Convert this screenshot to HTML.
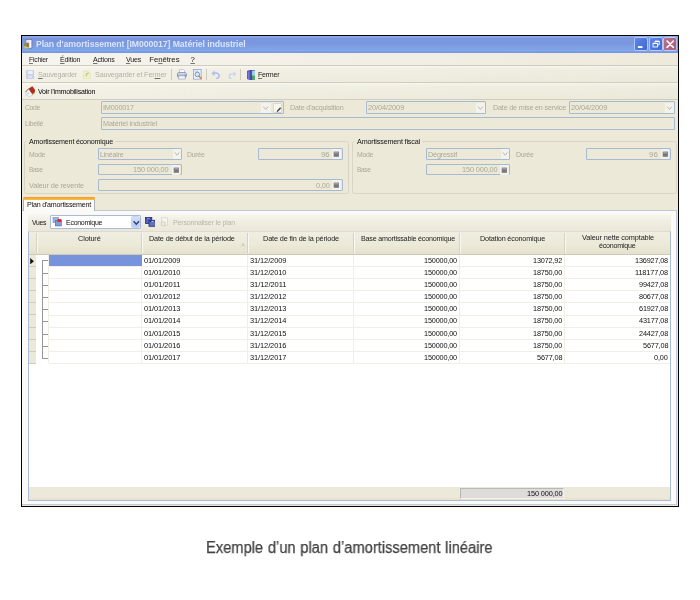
<!DOCTYPE html>
<html lang="fr"><head><meta charset="utf-8"><title>Plan d'amortissement</title>
<style>
html,body{margin:0;padding:0;background:#fff;}
body{width:700px;height:600px;position:relative;overflow:hidden;font-family:'Liberation Sans',sans-serif;}
#r{position:absolute;left:0;top:0;width:700px;height:600px;will-change:transform;opacity:.999;filter:blur(.35px);}
#r>div{position:absolute;box-sizing:border-box;}
#r svg{display:block;position:absolute;left:0;top:0;}
.t{position:absolute;white-space:pre;font-family:'Liberation Sans',sans-serif;}
u{text-decoration:underline;text-decoration-thickness:.6px;text-underline-offset:.6px;text-decoration-color:rgba(30,30,30,.6);}
</style></head>
<body><div id="r">
<div style="left:21px;top:35px;width:658px;height:472px;background:#000;"></div>
<div style="left:22px;top:36px;width:656px;height:470px;background:#ece9d8;"></div>
<div style="left:22px;top:36px;width:656px;height:16.6px;background:linear-gradient(#8eabea 0%,#89a6e6 7%,#7a96de 15%,#7a97df 45%,#7ea1e4 70%,#81a8e9 87%,#7795e0 94%,#7a98e2 100%);"></div>
<span class="t" style="left:35.70px;top:38.25px;font-size:9px;line-height:13px;color:#dae4f9;letter-spacing:-0.093px;font-weight:bold;transform:scaleX(0.9679);transform-origin:0 50%;">Plan d'amortissement [IM000017] Matériel industriel</span>
<div style="left:23.2px;top:38.8px;width:9.6px;height:10.2px;"><svg width="9.6" height="10.2" viewBox="0 0 9.6 10.2"><rect x="3" y=".6" width="5.9" height="8.6" fill="#f3f6fc" stroke="#6a7086" stroke-width=".7"/><rect x="3.6" y="1.2" width="3" height="7.4" fill="#dfe6f4"/><rect x=".3" y="3.4" width="5.8" height="6.2" rx=".8" fill="#b9a574"/><rect x="1" y="3.8" width="2.2" height="3.4" fill="#6f9a58"/><rect x="3.6" y="4.2" width="2" height="3.6" fill="#8b6a40"/><rect x="1.2" y="7.4" width="1.8" height="1.8" fill="#d8c060"/><rect x="3.4" y="8" width="1.8" height="1.4" fill="#c8c8c0"/></svg></div>
<div style="left:635px;top:38px;width:12.2px;height:12.2px;background:linear-gradient(135deg,#5f86e6,#3f66d6);border-radius:1.5px;box-shadow:0 0 0 .7px rgba(230,238,255,.75);"><svg width="12.2" height="12.2" viewBox="0 0 12 12"><rect x="2.8" y="8" width="4.6" height="1.8" fill="#fff"/></svg></div>
<div style="left:649.7px;top:38px;width:12.2px;height:12.2px;background:linear-gradient(135deg,#5f86e6,#3f66d6);border-radius:1.5px;box-shadow:0 0 0 .7px rgba(230,238,255,.75);"><svg width="12.2" height="12.2" viewBox="0 0 12 12"><g fill="none" stroke="#fff" stroke-width=".9"><path d="M4.9 4.6V3.2h4.2v3.6H7.8"/><rect x="3" y="5.2" width="4.4" height="3.6"/></g><path d="M3 5.4h4.4M4.9 3.4h4.2" stroke="#fff" stroke-width="1.2"/></svg></div>
<div style="left:664.3px;top:38px;width:12.2px;height:12.2px;background:linear-gradient(135deg,#b8708a,#a85c78);border-radius:1.5px;box-shadow:0 0 0 .7px rgba(230,238,255,.75);"><svg width="12.2" height="12.2" viewBox="0 0 12 12"><path d="M3 3l6.2 6.2M9.2 3L3 9.2" stroke="#fff" stroke-width="1.6" stroke-linecap="round"/></svg></div>
<div style="left:22px;top:52.6px;width:656px;height:12.6px;background:linear-gradient(90deg,#f5f4ee 0%,#f2f0e6 45%,#edeadb 100%);"></div>
<div style="left:22px;top:65px;width:656px;height:0.9px;background:#d1cdbd;"></div>
<span class="t" style="left:29.10px;top:53.70px;font-size:7.8px;line-height:11.8px;color:#1a1a1a;letter-spacing:-0.281px;transform:scaleX(0.8768);transform-origin:0 50%;"><u>F</u>ichier</span>
<span class="t" style="left:59.90px;top:53.70px;font-size:7.8px;line-height:11.8px;color:#1a1a1a;letter-spacing:-0.212px;transform:scaleX(0.9080);transform-origin:0 50%;"><u>É</u>dition</span>
<span class="t" style="left:92.50px;top:53.70px;font-size:7.8px;line-height:11.8px;color:#1a1a1a;letter-spacing:-0.239px;transform:scaleX(0.9035);transform-origin:0 50%;"><u>A</u>ctions</span>
<span class="t" style="left:126.00px;top:53.70px;font-size:7.8px;line-height:11.8px;color:#1a1a1a;letter-spacing:-0.262px;transform:scaleX(0.9117);transform-origin:0 50%;"><u>V</u>ues</span>
<span class="t" style="left:149.20px;top:53.70px;font-size:7.8px;line-height:11.8px;color:#1a1a1a;letter-spacing:-0.062px;">Fe<u>n</u>êtres</span>
<span class="t" style="left:190.50px;top:53.70px;font-size:7.8px;line-height:11.8px;color:#1a1a1a;"><u>?</u></span>
<div style="left:22px;top:65.9px;width:656px;height:16.4px;background:linear-gradient(90deg,rgba(255,255,255,.3) 0%,rgba(255,255,255,.12) 45%,rgba(255,255,255,0) 100%),linear-gradient(#f6f5ee 0%,#efede0 20%,#ece9d9 100%);"></div>
<div style="left:22px;top:82.2px;width:656px;height:0.9px;background:#d1cdbd;"></div>
<div style="left:25.6px;top:70px;width:8.8px;height:9px;"><svg width="8.5" height="9" viewBox="0 0 8.5 9"><rect x=".4" y=".4" width="7.7" height="8.2" rx=".8" fill="#c9d1ee" stroke="#b3bde0" stroke-width=".6"/><rect x="1.8" y=".8" width="4.9" height="3.2" fill="#eef0f8"/><rect x="2.2" y="5.6" width="4.1" height="2.6" fill="#dfe3f3"/></svg></div>
<span class="t" style="left:37.50px;top:68.80px;font-size:7.8px;line-height:11.8px;color:#b4b0a2;letter-spacing:-0.214px;transform:scaleX(0.9220);transform-origin:0 50%;"><u>S</u>auvegarder</span>
<div style="left:83.4px;top:69.5px;width:8px;height:9.5px;"><svg width="8" height="9.5" viewBox="0 0 8 9.5"><path d="M.6 1.2h4.6l2.2 2.2v5.5H.6z" fill="#f6efc3" stroke="#e3dcae" stroke-width=".6"/><path d="M3.2 6.5c-.2-2 1-3.3 2.6-3.6" fill="none" stroke="#a9d19a" stroke-width="1.1"/></svg></div>
<span class="t" style="left:95.20px;top:68.80px;font-size:7.8px;line-height:11.8px;color:#b4b0a2;letter-spacing:-0.180px;transform:scaleX(0.9305);transform-origin:0 50%;">Sauvegarder et Fer<u>m</u>er</span>
<div style="left:171.2px;top:68.6px;width:0.8px;height:11.4px;background:#cfccbd;"></div>
<div style="left:177px;top:69px;width:9.8px;height:10.8px;"><svg width="9.8" height="10.8" viewBox="0 0 10 11"><path d="M2.6 4V.7h4l1 1V4z" fill="#fdfdfe" stroke="#8a92b0" stroke-width=".5"/><rect x=".5" y="3.8" width="9" height="4.4" rx="1" fill="#aeb8da" stroke="#5a648e" stroke-width=".6"/><rect x=".9" y="4.2" width="8.2" height="1.3" fill="#d7ddf0"/><rect x="7.6" y="5.6" width="1" height=".9" fill="#4fae4a"/><path d="M2 7h6l.8 3.2H1.2z" fill="#f6f7fb" stroke="#7a84a8" stroke-width=".5"/></svg></div>
<div style="left:192.8px;top:69px;width:9.2px;height:10.8px;"><svg width="9.2" height="10.8" viewBox="0 0 9.2 10.8"><rect x=".5" y=".5" width="7.6" height="9.6" fill="#f4f7fd" stroke="#7f97c8" stroke-width=".7"/><rect x="1.6" y="1.6" width="4" height="1" fill="#b5c7ea"/><circle cx="4.3" cy="5.4" r="2.3" fill="#d3e8f8" stroke="#5b82c0" stroke-width=".8"/><path d="M6 7.2l2.4 2.3" stroke="#d08a2c" stroke-width="1.5" stroke-linecap="round"/></svg></div>
<div style="left:206.1px;top:68.6px;width:0.8px;height:11.4px;background:#cfccbd;"></div>
<div style="left:211.2px;top:70px;width:9.6px;height:9.2px;"><svg width="9.6" height="9.2" viewBox="0 0 9.6 9.2"><path d="M3 3.2h2.6a2.6 2.6 0 0 1 1.2 4.9L5.2 8.8" fill="none" stroke="#b5c0ea" stroke-width="1.7"/><path d="M.3 3.4L3.6.3v5.6z" fill="#b5c0ea"/></svg></div>
<div style="left:227.6px;top:70.6px;width:8.8px;height:8.4px;"><svg width="8.8" height="8.4" viewBox="0 0 8.8 8.4"><path d="M6 3H3.7a2.3 2.3 0 0 0-1 4.4l1.2.5" fill="none" stroke="#ccd3f0" stroke-width="1.5"/><path d="M8.6 3.1L5.6.3v5.4z" fill="#ccd3f0"/></svg></div>
<div style="left:240.1px;top:68.6px;width:0.8px;height:11.4px;background:#cfccbd;"></div>
<div style="left:246.6px;top:69.6px;width:8.8px;height:10px;"><svg width="8.8" height="10" viewBox="0 0 8.8 10"><rect x="3.4" y=".7" width="4.9" height="8.6" fill="#9fd0ee" stroke="#3b4a8a" stroke-width=".6"/><rect x="3.8" y="5.6" width="4.1" height="3.4" fill="#3fb24e"/><path d="M.4 1l4.2-.8v9.6L.4 8.9z" fill="#4c46b8" stroke="#2a2a78" stroke-width=".5"/><path d="M1 1.6l1.6-.3v8L1 8.9z" fill="#7a78dc"/></svg></div>
<span class="t" style="left:258.00px;top:68.80px;font-size:7.8px;line-height:11.8px;color:#1a1a1a;letter-spacing:-0.269px;transform:scaleX(0.9053);transform-origin:0 50%;"><u>F</u>ermer</span>
<div style="left:22px;top:83.1px;width:656px;height:16.2px;background:linear-gradient(90deg,rgba(255,255,255,.3) 0%,rgba(255,255,255,.12) 45%,rgba(255,255,255,0) 100%),linear-gradient(#f6f5ee 0%,#efede0 20%,#ece9d9 100%);"></div>
<div style="left:22px;top:99.2px;width:656px;height:0.9px;background:#d1cdbd;"></div>
<div style="left:24.6px;top:85.6px;width:10.8px;height:11.2px;"><svg width="10.8" height="11.2" viewBox="0 0 10.8 11.2"><path d="M7.2 7.8L10.4 4.7l-.1 1.9L7.2 9.4z" fill="#b98a4e"/><path d="M3.7 2.8L.7 6l.4 2.9 3.8 1.8 2.3-1.7V7.6z" fill="#f4f6fb" stroke="#aab2c4" stroke-width=".45"/><rect x="2.3" y="6.6" width="1.9" height="1.5" fill="#b9c6de"/><path d="M3.7 2.8L7.4.5l3 4.2-3.2 3.1z" fill="#b42b1d" stroke="#8f2216" stroke-width=".4"/><path d="M.5 6.1l3.2-3.4" stroke="#8d5a30" stroke-width=".9"/><path d="M7.2 7.9l3.2-3.1" stroke="#9a5a2c" stroke-width=".5"/></svg></div>
<span class="t" style="left:37.50px;top:86.00px;font-size:7.8px;line-height:11.8px;color:#000;letter-spacing:-0.221px;transform:scaleX(0.8996);transform-origin:0 50%;">Voir l'immobilisation</span>
<span class="t" style="left:25.00px;top:102.10px;font-size:7.8px;line-height:11.8px;color:#aca899;letter-spacing:-0.388px;transform:scaleX(0.8778);transform-origin:0 50%;">Code</span>
<div style="left:101.1px;top:101.4px;width:183.1px;height:12.9px;background:#ece9d8;border:1px solid #a6bbd2;border-radius:1px;"></div>
<span class="t" style="left:103.00px;top:102.30px;font-size:7.8px;line-height:11.8px;color:#aca899;letter-spacing:-0.201px;transform:scaleX(0.9312);transform-origin:0 50%;">IM000017</span>
<div style="left:261.4px;top:102.6px;width:9.4px;height:10.6px;background:#f3f2ec;"><svg width="9.4" height="10.6" viewBox="0 0 9 11"><path d="M2 3.7l2.5 3L7 3.7" fill="none" stroke="#b3b0a4" stroke-width=".95"/></svg></div>
<div style="left:272.8px;top:102.5px;width:9.6px;height:10.8px;background:#f7f6f1;border-radius:1px;border:.5px solid #dcd9cc;"><svg width="9.4" height="10.6" viewBox="0 0 9.4 10.6"><path d="M2.6 8.2l.5-1.7 3-3.3 1.1 1.1-3 3.3z" fill="#45454c"/><path d="M2 9h5" stroke="#a5a5a8" stroke-width=".5"/></svg></div>
<span class="t" style="left:289.60px;top:102.10px;font-size:7.8px;line-height:11.8px;color:#aca899;letter-spacing:-0.181px;transform:scaleX(0.9215);transform-origin:0 50%;">Date d'acquisition</span>
<div style="left:366.1px;top:101.4px;width:120.4px;height:12.9px;background:#ece9d8;border:1px solid #a6bbd2;border-radius:1px;"></div>
<span class="t" style="left:368.00px;top:102.30px;font-size:7.8px;line-height:11.8px;color:#aca899;letter-spacing:-0.116px;transform:scaleX(0.9558);transform-origin:0 50%;">20/04/2009</span>
<div style="left:476.4px;top:102.6px;width:9px;height:10.6px;background:#f3f2ec;"><svg width="9" height="10.6" viewBox="0 0 9 11"><path d="M2 3.7l2.5 3L7 3.7" fill="none" stroke="#b3b0a4" stroke-width=".95"/></svg></div>
<span class="t" style="left:492.90px;top:102.10px;font-size:7.8px;line-height:11.8px;color:#aca899;letter-spacing:-0.193px;transform:scaleX(0.9216);transform-origin:0 50%;">Date de mise en service</span>
<div style="left:569.2px;top:101.4px;width:105.9px;height:12.9px;background:#ece9d8;border:1px solid #a6bbd2;border-radius:1px;"></div>
<span class="t" style="left:571.20px;top:102.30px;font-size:7.8px;line-height:11.8px;color:#aca899;letter-spacing:-0.116px;transform:scaleX(0.9558);transform-origin:0 50%;">20/04/2009</span>
<div style="left:665px;top:102.6px;width:9px;height:10.6px;background:#f3f2ec;"><svg width="9" height="10.6" viewBox="0 0 9 11"><path d="M2 3.7l2.5 3L7 3.7" fill="none" stroke="#b3b0a4" stroke-width=".95"/></svg></div>
<span class="t" style="left:25.00px;top:117.70px;font-size:7.8px;line-height:11.8px;color:#aca899;letter-spacing:-0.277px;transform:scaleX(0.8736);transform-origin:0 50%;">Libellé</span>
<div style="left:101.1px;top:117.1px;width:574px;height:12.7px;background:#ece9d8;border:1px solid #a6bbd2;border-radius:1px;"></div>
<span class="t" style="left:103.00px;top:118.00px;font-size:7.8px;line-height:11.8px;color:#aca899;letter-spacing:-0.155px;transform:scaleX(0.9285);transform-origin:0 50%;">Matériel industriel</span>
<div style="left:23.9px;top:140.8px;width:324.8px;height:53.6px;border:1px solid #d9d5c3;border-radius:2.5px;"></div>
<div style="left:27.3px;top:138.8px;width:88px;height:5px;background:#ece9d8;"></div>
<span class="t" style="left:29.30px;top:135.70px;font-size:7.8px;line-height:11.8px;color:#111;letter-spacing:-0.220px;transform:scaleX(0.9193);transform-origin:0 50%;">Amortissement économique</span>
<div style="left:351.6px;top:140.8px;width:325px;height:53.6px;border:1px solid #d9d5c3;border-radius:2.5px;"></div>
<div style="left:355.4px;top:138.8px;width:67px;height:5px;background:#ece9d8;"></div>
<span class="t" style="left:357.40px;top:135.70px;font-size:7.8px;line-height:11.8px;color:#111;letter-spacing:-0.186px;transform:scaleX(0.9235);transform-origin:0 50%;">Amortissement fiscal</span>
<span class="t" style="left:28.70px;top:148.70px;font-size:7.8px;line-height:11.8px;color:#aca899;letter-spacing:-0.373px;transform:scaleX(0.8877);transform-origin:0 50%;">Mode</span>
<div style="left:98.3px;top:147.9px;width:83.6px;height:12.5px;background:#ece9d8;border:1px solid #a6bbd2;border-radius:1px;"></div>
<span class="t" style="left:99.90px;top:148.90px;font-size:7.8px;line-height:11.8px;color:#aca899;letter-spacing:-0.229px;transform:scaleX(0.9028);transform-origin:0 50%;">Linéaire</span>
<div style="left:172.6px;top:149.1px;width:8.2px;height:10.2px;background:#f3f2ec;"><svg width="8.2" height="10.2" viewBox="0 0 9 11"><path d="M2 3.7l2.5 3L7 3.7" fill="none" stroke="#b3b0a4" stroke-width=".95"/></svg></div>
<span class="t" style="left:187.30px;top:148.70px;font-size:7.8px;line-height:11.8px;color:#aca899;letter-spacing:-0.318px;transform:scaleX(0.8900);transform-origin:0 50%;">Durée</span>
<div style="left:257.9px;top:147.9px;width:85px;height:12.5px;background:#ece9d8;border:1px solid #a6bbd2;border-radius:1px;"></div>
<span class="t" style="left:320.91px;top:148.90px;font-size:7.8px;line-height:11.8px;color:#aca899;">96</span>
<div style="left:332.3px;top:149px;width:8.6px;height:10.4px;background:#f3f2ec;border-radius:1px;"><svg width="8.6" height="10.4" viewBox="0 0 8.6 10.4"><rect x="1.7" y="2.6" width="5.2" height="5.2" fill="#77777c"/><rect x="2.3" y="3.2" width="4" height="1.2" fill="#a9a9b0"/></svg></div>
<span class="t" style="left:28.70px;top:164.20px;font-size:7.8px;line-height:11.8px;color:#aca899;letter-spacing:-0.452px;transform:scaleX(0.8514);transform-origin:0 50%;">Base</span>
<div style="left:98.3px;top:163.6px;width:83.6px;height:11.9px;background:#ece9d8;border:1px solid #a6bbd2;border-radius:1px;"></div>
<span class="t" style="left:133.10px;top:164.40px;font-size:7.8px;line-height:11.8px;color:#aca899;letter-spacing:-0.145px;transform:scaleX(0.9447);transform-origin:0 50%;">150 000,00</span>
<div style="left:171.6px;top:164.5px;width:8.6px;height:10.4px;background:#f3f2ec;border-radius:1px;"><svg width="8.6" height="10.4" viewBox="0 0 8.6 10.4"><rect x="1.7" y="2.6" width="5.2" height="5.2" fill="#77777c"/><rect x="2.3" y="3.2" width="4" height="1.2" fill="#a9a9b0"/></svg></div>
<span class="t" style="left:28.70px;top:179.70px;font-size:7.8px;line-height:11.8px;color:#aca899;letter-spacing:-0.145px;transform:scaleX(0.9399);transform-origin:0 50%;">Valeur de revente</span>
<div style="left:98.3px;top:179px;width:244.6px;height:11.8px;background:#ece9d8;border:1px solid #a6bbd2;border-radius:1px;"></div>
<span class="t" style="left:316.00px;top:179.80px;font-size:7.8px;line-height:11.8px;color:#aca899;letter-spacing:-0.164px;transform:scaleX(0.9359);transform-origin:0 50%;">0,00</span>
<div style="left:332.3px;top:179.8px;width:8.6px;height:10.4px;background:#f3f2ec;border-radius:1px;"><svg width="8.6" height="10.4" viewBox="0 0 8.6 10.4"><rect x="1.7" y="2.6" width="5.2" height="5.2" fill="#77777c"/><rect x="2.3" y="3.2" width="4" height="1.2" fill="#a9a9b0"/></svg></div>
<span class="t" style="left:356.90px;top:148.70px;font-size:7.8px;line-height:11.8px;color:#aca899;letter-spacing:-0.373px;transform:scaleX(0.8877);transform-origin:0 50%;">Mode</span>
<div style="left:426.4px;top:147.9px;width:84px;height:12.5px;background:#ece9d8;border:1px solid #a6bbd2;border-radius:1px;"></div>
<span class="t" style="left:428.00px;top:148.90px;font-size:7.8px;line-height:11.8px;color:#aca899;letter-spacing:-0.182px;transform:scaleX(0.9265);transform-origin:0 50%;">Dégressif</span>
<div style="left:501px;top:149.1px;width:8.3px;height:10.2px;background:#f3f2ec;"><svg width="8.3" height="10.2" viewBox="0 0 9 11"><path d="M2 3.7l2.5 3L7 3.7" fill="none" stroke="#b3b0a4" stroke-width=".95"/></svg></div>
<span class="t" style="left:516.40px;top:148.70px;font-size:7.8px;line-height:11.8px;color:#aca899;letter-spacing:-0.318px;transform:scaleX(0.8900);transform-origin:0 50%;">Durée</span>
<div style="left:586.1px;top:147.9px;width:85.3px;height:12.5px;background:#ece9d8;border:1px solid #a6bbd2;border-radius:1px;"></div>
<span class="t" style="left:649.11px;top:148.90px;font-size:7.8px;line-height:11.8px;color:#aca899;">96</span>
<div style="left:660.6px;top:149px;width:8.6px;height:10.4px;background:#f3f2ec;border-radius:1px;"><svg width="8.6" height="10.4" viewBox="0 0 8.6 10.4"><rect x="1.7" y="2.6" width="5.2" height="5.2" fill="#77777c"/><rect x="2.3" y="3.2" width="4" height="1.2" fill="#a9a9b0"/></svg></div>
<span class="t" style="left:356.90px;top:164.20px;font-size:7.8px;line-height:11.8px;color:#aca899;letter-spacing:-0.452px;transform:scaleX(0.8514);transform-origin:0 50%;">Base</span>
<div style="left:426.4px;top:163.6px;width:84px;height:11.9px;background:#ece9d8;border:1px solid #a6bbd2;border-radius:1px;"></div>
<span class="t" style="left:461.50px;top:164.40px;font-size:7.8px;line-height:11.8px;color:#aca899;letter-spacing:-0.145px;transform:scaleX(0.9447);transform-origin:0 50%;">150 000,00</span>
<div style="left:500.2px;top:164.5px;width:8.6px;height:10.4px;background:#f3f2ec;border-radius:1px;"><svg width="8.6" height="10.4" viewBox="0 0 8.6 10.4"><rect x="1.7" y="2.6" width="5.2" height="5.2" fill="#77777c"/><rect x="2.3" y="3.2" width="4" height="1.2" fill="#a9a9b0"/></svg></div>
<div style="left:22px;top:210px;width:654.9px;height:294.9px;background:#fbfaf8;border:.8px solid #c0c9d3;border-left:none;"></div>
<div style="left:23.3px;top:197.4px;width:72px;height:13.5px;background:#fbfaf7;border:1px solid #a9b3bd;border-bottom:none;border-radius:2px 2px 0 0;"></div>
<div style="left:23.3px;top:197.4px;width:72px;height:2.2px;background:linear-gradient(#f29a1c,#f8c04c);border-radius:2px 2px 0 0;"></div>
<span class="t" style="left:26.90px;top:198.60px;font-size:7.8px;line-height:11.8px;color:#111;letter-spacing:-0.225px;transform:scaleX(0.9112);transform-origin:0 50%;">Plan d'amortissement</span>
<div style="left:28px;top:214.3px;width:643px;height:16.6px;background:linear-gradient(#f8f7f1 0%,#f0eee2 40%,#ebe8d9 100%);"></div>
<span class="t" style="left:32.40px;top:216.80px;font-size:7.8px;line-height:11.8px;color:#111;letter-spacing:-0.372px;transform:scaleX(0.8752);transform-origin:0 50%;">Vues</span>
<div style="left:50.4px;top:215.4px;width:90.6px;height:13.4px;background:#fff;border:1px solid #a9bdd6;border-radius:1px;"></div>
<div style="left:52.2px;top:217.1px;width:10.6px;height:9.8px;"><svg width="10.6" height="9.8" viewBox="0 0 9 9.4"><rect x=".4" y=".6" width="5.4" height="4.6" fill="#9fb7e4" stroke="#5570b0" stroke-width=".5"/><rect x="2.6" y="3.2" width="5.8" height="5.4" fill="#7fa0d8" stroke="#3c5aa0" stroke-width=".5"/><rect x="4.6" y="2" width="3.8" height="2.8" fill="#e8252c"/></svg></div>
<span class="t" style="left:65.60px;top:216.70px;font-size:7.8px;line-height:11.8px;color:#111;letter-spacing:-0.301px;transform:scaleX(0.8976);transform-origin:0 50%;">Economique</span>
<div style="left:131px;top:216.4px;width:8.9px;height:11.4px;background:linear-gradient(#d3dffb,#b7caf6);border-radius:1.5px;border:.6px solid #c6d4f8;"><svg width="8.9" height="11.4" viewBox="0 0 8.9 11.4"><path d="M1.6 4.3l2.7 2.9L7 4.3" fill="none" stroke="#2e3f72" stroke-width="1.45"/></svg></div>
<div style="left:144.6px;top:217.2px;width:10.8px;height:9.8px;"><svg width="10.8" height="9.8" viewBox="0 0 10.8 9.8"><rect x=".5" y=".5" width="6.3" height="6" fill="#5468b4" stroke="#1f2c8c" stroke-width=".8"/><rect x="1" y="1" width="5.3" height="1.2" fill="#2a3898"/><rect x="4" y="3.3" width="6.3" height="6" fill="#6474b0" stroke="#1f2c8c" stroke-width=".8"/><rect x="4.5" y="3.8" width="5.3" height="1.3" fill="#2a3898"/><rect x="6.4" y="4" width="2.4" height=".7" fill="#e8ecf8"/><rect x="2" y="1.2" width="2.6" height=".6" fill="#c9d2f0"/></svg></div>
<div style="left:160.2px;top:217.2px;width:9px;height:10px;"><svg width="9" height="10" viewBox="0 0 9 10"><rect x="1.4" y=".8" width="6" height="7.6" fill="#f4f3ee" stroke="#cfccc0" stroke-width=".6"/><circle cx="3.4" cy="6.8" r="2.2" fill="#e9e7de" stroke="#c9c6ba" stroke-width=".6"/></svg></div>
<span class="t" style="left:172.80px;top:216.80px;font-size:7.8px;line-height:11.8px;color:#b9b6a8;letter-spacing:-0.216px;transform:scaleX(0.9079);transform-origin:0 50%;">Personnaliser le plan</span>
<div style="left:28.3px;top:230.7px;width:642.5px;height:269.9px;background:#fff;border:1px solid #abbdd4;border-top:.8px solid #dddbd0;"></div>
<div style="left:29.2px;top:231.6px;width:640.7px;height:22.8px;background:linear-gradient(#f0eee1 0%,#ece9d8 60%,#e5e1ce 100%);"></div>
<div style="left:29.2px;top:253.9px;width:640.7px;height:0.9px;background:#cfcab5;"></div>
<div style="left:35.7px;top:233.1px;width:0.8px;height:19.8px;background:#d6d2c1;"></div>
<div style="left:36.5px;top:233.1px;width:0.8px;height:19.8px;background:#f9f8f2;"></div>
<div style="left:141.1px;top:233.1px;width:0.8px;height:19.8px;background:#d6d2c1;"></div>
<div style="left:141.9px;top:233.1px;width:0.8px;height:19.8px;background:#f9f8f2;"></div>
<div style="left:247.1px;top:233.1px;width:0.8px;height:19.8px;background:#d6d2c1;"></div>
<div style="left:247.9px;top:233.1px;width:0.8px;height:19.8px;background:#f9f8f2;"></div>
<div style="left:353px;top:233.1px;width:0.8px;height:19.8px;background:#d6d2c1;"></div>
<div style="left:353.8px;top:233.1px;width:0.8px;height:19.8px;background:#f9f8f2;"></div>
<div style="left:458.7px;top:233.1px;width:0.8px;height:19.8px;background:#d6d2c1;"></div>
<div style="left:459.5px;top:233.1px;width:0.8px;height:19.8px;background:#f9f8f2;"></div>
<div style="left:564.1px;top:233.1px;width:0.8px;height:19.8px;background:#d6d2c1;"></div>
<div style="left:564.9px;top:233.1px;width:0.8px;height:19.8px;background:#f9f8f2;"></div>
<span class="t" style="left:78.10px;top:232.50px;font-size:7.8px;line-height:11.8px;color:#1c1c1c;letter-spacing:-0.150px;transform:scaleX(0.9381);transform-origin:0 50%;">Cloturé</span>
<span class="t" style="left:149.15px;top:232.50px;font-size:7.8px;line-height:11.8px;color:#1c1c1c;letter-spacing:-0.162px;transform:scaleX(0.9327);transform-origin:0 50%;">Date de début de la période</span>
<span class="t" style="left:263.00px;top:232.50px;font-size:7.8px;line-height:11.8px;color:#1c1c1c;letter-spacing:-0.148px;transform:scaleX(0.9353);transform-origin:0 50%;">Date de fin de la période</span>
<span class="t" style="left:360.50px;top:232.50px;font-size:7.8px;line-height:11.8px;color:#1c1c1c;letter-spacing:-0.221px;transform:scaleX(0.9160);transform-origin:0 50%;">Base amortissable économique</span>
<span class="t" style="left:480.00px;top:232.50px;font-size:7.8px;line-height:11.8px;color:#1c1c1c;letter-spacing:-0.190px;transform:scaleX(0.9275);transform-origin:0 50%;">Dotation économique</span>
<span class="t" style="left:581.50px;top:232.30px;font-size:7.8px;line-height:11.8px;color:#1c1c1c;letter-spacing:-0.143px;transform:scaleX(0.9415);transform-origin:0 50%;">Valeur nette comptable</span>
<span class="t" style="left:599.25px;top:240.10px;font-size:7.8px;line-height:11.8px;color:#1c1c1c;letter-spacing:-0.250px;transform:scaleX(0.9129);transform-origin:0 50%;">économique</span>
<div style="left:240.6px;top:243px;width:4px;height:4px;"><svg width="4" height="4" viewBox="0 0 4 4"><path d="M.5 3.6L2 .6l1.5 3" fill="none" stroke="#b5b09c" stroke-width=".6"/></svg></div>
<div style="left:29.2px;top:254.5px;width:7.2px;height:108.9px;background:#ece9d8;"></div>
<div style="left:48.6px;top:266.1px;width:621.3px;height:0.9px;background:#f1efe3;"></div>
<div style="left:29.2px;top:266px;width:7.2px;height:1px;background:#d2cdb9;"></div>
<span class="t" style="left:143.50px;top:254.95px;font-size:7.8px;line-height:11.8px;color:#111;letter-spacing:-0.112px;transform:scaleX(0.9574);transform-origin:0 50%;">01/01/2009</span>
<span class="t" style="left:249.50px;top:254.95px;font-size:7.8px;line-height:11.8px;color:#111;letter-spacing:-0.112px;transform:scaleX(0.9574);transform-origin:0 50%;">31/12/2009</span>
<span class="t" style="left:424.18px;top:254.95px;font-size:7.8px;line-height:11.8px;color:#111;letter-spacing:-0.176px;transform:scaleX(0.9361);transform-origin:0 50%;">150000,00</span>
<span class="t" style="left:533.34px;top:254.95px;font-size:7.8px;line-height:11.8px;color:#111;letter-spacing:-0.174px;transform:scaleX(0.9365);transform-origin:0 50%;">13072,92</span>
<span class="t" style="left:634.88px;top:254.95px;font-size:7.8px;line-height:11.8px;color:#111;letter-spacing:-0.176px;transform:scaleX(0.9361);transform-origin:0 50%;">136927,08</span>
<div style="left:48.6px;top:278.2px;width:621.3px;height:0.9px;background:#f1efe3;"></div>
<div style="left:29.2px;top:278.1px;width:7.2px;height:1px;background:#d2cdb9;"></div>
<span class="t" style="left:143.50px;top:267.05px;font-size:7.8px;line-height:11.8px;color:#111;letter-spacing:-0.112px;transform:scaleX(0.9574);transform-origin:0 50%;">01/01/2010</span>
<span class="t" style="left:249.50px;top:267.05px;font-size:7.8px;line-height:11.8px;color:#111;letter-spacing:-0.112px;transform:scaleX(0.9574);transform-origin:0 50%;">31/12/2010</span>
<span class="t" style="left:424.18px;top:267.05px;font-size:7.8px;line-height:11.8px;color:#111;letter-spacing:-0.176px;transform:scaleX(0.9361);transform-origin:0 50%;">150000,00</span>
<span class="t" style="left:533.34px;top:267.05px;font-size:7.8px;line-height:11.8px;color:#111;letter-spacing:-0.174px;transform:scaleX(0.9365);transform-origin:0 50%;">18750,00</span>
<span class="t" style="left:634.88px;top:267.05px;font-size:7.8px;line-height:11.8px;color:#111;letter-spacing:-0.149px;transform:scaleX(0.9451);transform-origin:0 50%;">118177,08</span>
<div style="left:48.6px;top:290.3px;width:621.3px;height:0.9px;background:#f1efe3;"></div>
<div style="left:29.2px;top:290.2px;width:7.2px;height:1px;background:#d2cdb9;"></div>
<span class="t" style="left:143.50px;top:279.15px;font-size:7.8px;line-height:11.8px;color:#111;letter-spacing:-0.088px;transform:scaleX(0.9660);transform-origin:0 50%;">01/01/2011</span>
<span class="t" style="left:249.50px;top:279.15px;font-size:7.8px;line-height:11.8px;color:#111;letter-spacing:-0.088px;transform:scaleX(0.9660);transform-origin:0 50%;">31/12/2011</span>
<span class="t" style="left:424.18px;top:279.15px;font-size:7.8px;line-height:11.8px;color:#111;letter-spacing:-0.176px;transform:scaleX(0.9361);transform-origin:0 50%;">150000,00</span>
<span class="t" style="left:533.34px;top:279.15px;font-size:7.8px;line-height:11.8px;color:#111;letter-spacing:-0.174px;transform:scaleX(0.9365);transform-origin:0 50%;">18750,00</span>
<span class="t" style="left:638.74px;top:279.15px;font-size:7.8px;line-height:11.8px;color:#111;letter-spacing:-0.174px;transform:scaleX(0.9365);transform-origin:0 50%;">99427,08</span>
<div style="left:48.6px;top:302.4px;width:621.3px;height:0.9px;background:#f1efe3;"></div>
<div style="left:29.2px;top:302.3px;width:7.2px;height:1px;background:#d2cdb9;"></div>
<span class="t" style="left:143.50px;top:291.25px;font-size:7.8px;line-height:11.8px;color:#111;letter-spacing:-0.112px;transform:scaleX(0.9574);transform-origin:0 50%;">01/01/2012</span>
<span class="t" style="left:249.50px;top:291.25px;font-size:7.8px;line-height:11.8px;color:#111;letter-spacing:-0.112px;transform:scaleX(0.9574);transform-origin:0 50%;">31/12/2012</span>
<span class="t" style="left:424.18px;top:291.25px;font-size:7.8px;line-height:11.8px;color:#111;letter-spacing:-0.176px;transform:scaleX(0.9361);transform-origin:0 50%;">150000,00</span>
<span class="t" style="left:533.34px;top:291.25px;font-size:7.8px;line-height:11.8px;color:#111;letter-spacing:-0.174px;transform:scaleX(0.9365);transform-origin:0 50%;">18750,00</span>
<span class="t" style="left:638.74px;top:291.25px;font-size:7.8px;line-height:11.8px;color:#111;letter-spacing:-0.174px;transform:scaleX(0.9365);transform-origin:0 50%;">80677,08</span>
<div style="left:48.6px;top:314.5px;width:621.3px;height:0.9px;background:#f1efe3;"></div>
<div style="left:29.2px;top:314.4px;width:7.2px;height:1px;background:#d2cdb9;"></div>
<span class="t" style="left:143.50px;top:303.35px;font-size:7.8px;line-height:11.8px;color:#111;letter-spacing:-0.112px;transform:scaleX(0.9574);transform-origin:0 50%;">01/01/2013</span>
<span class="t" style="left:249.50px;top:303.35px;font-size:7.8px;line-height:11.8px;color:#111;letter-spacing:-0.112px;transform:scaleX(0.9574);transform-origin:0 50%;">31/12/2013</span>
<span class="t" style="left:424.18px;top:303.35px;font-size:7.8px;line-height:11.8px;color:#111;letter-spacing:-0.176px;transform:scaleX(0.9361);transform-origin:0 50%;">150000,00</span>
<span class="t" style="left:533.34px;top:303.35px;font-size:7.8px;line-height:11.8px;color:#111;letter-spacing:-0.174px;transform:scaleX(0.9365);transform-origin:0 50%;">18750,00</span>
<span class="t" style="left:638.74px;top:303.35px;font-size:7.8px;line-height:11.8px;color:#111;letter-spacing:-0.174px;transform:scaleX(0.9365);transform-origin:0 50%;">61927,08</span>
<div style="left:48.6px;top:326.6px;width:621.3px;height:0.9px;background:#f1efe3;"></div>
<div style="left:29.2px;top:326.5px;width:7.2px;height:1px;background:#d2cdb9;"></div>
<span class="t" style="left:143.50px;top:315.45px;font-size:7.8px;line-height:11.8px;color:#111;letter-spacing:-0.112px;transform:scaleX(0.9574);transform-origin:0 50%;">01/01/2014</span>
<span class="t" style="left:249.50px;top:315.45px;font-size:7.8px;line-height:11.8px;color:#111;letter-spacing:-0.112px;transform:scaleX(0.9574);transform-origin:0 50%;">31/12/2014</span>
<span class="t" style="left:424.18px;top:315.45px;font-size:7.8px;line-height:11.8px;color:#111;letter-spacing:-0.176px;transform:scaleX(0.9361);transform-origin:0 50%;">150000,00</span>
<span class="t" style="left:533.34px;top:315.45px;font-size:7.8px;line-height:11.8px;color:#111;letter-spacing:-0.174px;transform:scaleX(0.9365);transform-origin:0 50%;">18750,00</span>
<span class="t" style="left:638.74px;top:315.45px;font-size:7.8px;line-height:11.8px;color:#111;letter-spacing:-0.174px;transform:scaleX(0.9365);transform-origin:0 50%;">43177,08</span>
<div style="left:48.6px;top:338.7px;width:621.3px;height:0.9px;background:#f1efe3;"></div>
<div style="left:29.2px;top:338.6px;width:7.2px;height:1px;background:#d2cdb9;"></div>
<span class="t" style="left:143.50px;top:327.55px;font-size:7.8px;line-height:11.8px;color:#111;letter-spacing:-0.112px;transform:scaleX(0.9574);transform-origin:0 50%;">01/01/2015</span>
<span class="t" style="left:249.50px;top:327.55px;font-size:7.8px;line-height:11.8px;color:#111;letter-spacing:-0.112px;transform:scaleX(0.9574);transform-origin:0 50%;">31/12/2015</span>
<span class="t" style="left:424.18px;top:327.55px;font-size:7.8px;line-height:11.8px;color:#111;letter-spacing:-0.176px;transform:scaleX(0.9361);transform-origin:0 50%;">150000,00</span>
<span class="t" style="left:533.34px;top:327.55px;font-size:7.8px;line-height:11.8px;color:#111;letter-spacing:-0.174px;transform:scaleX(0.9365);transform-origin:0 50%;">18750,00</span>
<span class="t" style="left:638.74px;top:327.55px;font-size:7.8px;line-height:11.8px;color:#111;letter-spacing:-0.174px;transform:scaleX(0.9365);transform-origin:0 50%;">24427,08</span>
<div style="left:48.6px;top:350.8px;width:621.3px;height:0.9px;background:#f1efe3;"></div>
<div style="left:29.2px;top:350.7px;width:7.2px;height:1px;background:#d2cdb9;"></div>
<span class="t" style="left:143.50px;top:339.65px;font-size:7.8px;line-height:11.8px;color:#111;letter-spacing:-0.112px;transform:scaleX(0.9574);transform-origin:0 50%;">01/01/2016</span>
<span class="t" style="left:249.50px;top:339.65px;font-size:7.8px;line-height:11.8px;color:#111;letter-spacing:-0.112px;transform:scaleX(0.9574);transform-origin:0 50%;">31/12/2016</span>
<span class="t" style="left:424.18px;top:339.65px;font-size:7.8px;line-height:11.8px;color:#111;letter-spacing:-0.176px;transform:scaleX(0.9361);transform-origin:0 50%;">150000,00</span>
<span class="t" style="left:533.34px;top:339.65px;font-size:7.8px;line-height:11.8px;color:#111;letter-spacing:-0.174px;transform:scaleX(0.9365);transform-origin:0 50%;">18750,00</span>
<span class="t" style="left:642.60px;top:339.65px;font-size:7.8px;line-height:11.8px;color:#111;letter-spacing:-0.170px;transform:scaleX(0.9372);transform-origin:0 50%;">5677,08</span>
<div style="left:48.6px;top:362.9px;width:621.3px;height:0.9px;background:#f1efe3;"></div>
<div style="left:29.2px;top:362.8px;width:7.2px;height:1px;background:#d2cdb9;"></div>
<span class="t" style="left:143.50px;top:351.75px;font-size:7.8px;line-height:11.8px;color:#111;letter-spacing:-0.112px;transform:scaleX(0.9574);transform-origin:0 50%;">01/01/2017</span>
<span class="t" style="left:249.50px;top:351.75px;font-size:7.8px;line-height:11.8px;color:#111;letter-spacing:-0.112px;transform:scaleX(0.9574);transform-origin:0 50%;">31/12/2017</span>
<span class="t" style="left:424.18px;top:351.75px;font-size:7.8px;line-height:11.8px;color:#111;letter-spacing:-0.176px;transform:scaleX(0.9361);transform-origin:0 50%;">150000,00</span>
<span class="t" style="left:537.20px;top:351.75px;font-size:7.8px;line-height:11.8px;color:#111;letter-spacing:-0.170px;transform:scaleX(0.9372);transform-origin:0 50%;">5677,08</span>
<span class="t" style="left:654.18px;top:351.75px;font-size:7.8px;line-height:11.8px;color:#111;letter-spacing:-0.151px;transform:scaleX(0.9409);transform-origin:0 50%;">0,00</span>
<div style="left:48.2px;top:254.5px;width:0.9px;height:108.9px;background:#f1efe3;"></div>
<div style="left:141.2px;top:254.5px;width:0.9px;height:108.9px;background:#f1efe3;"></div>
<div style="left:247.2px;top:254.5px;width:0.9px;height:108.9px;background:#f1efe3;"></div>
<div style="left:353.1px;top:254.5px;width:0.9px;height:108.9px;background:#f1efe3;"></div>
<div style="left:458.8px;top:254.5px;width:0.9px;height:108.9px;background:#f1efe3;"></div>
<div style="left:564.2px;top:254.5px;width:0.9px;height:108.9px;background:#f1efe3;"></div>
<div style="left:49.2px;top:254.8px;width:92.6px;height:11px;background:#7793dc;"></div>
<div style="left:30.4px;top:257.5px;width:4px;height:6.4px;"><svg width="4" height="6.4" viewBox="0 0 4 6.4"><path d="M.2 0L3.9 3.2.2 6.4z" fill="#111"/></svg></div>
<div style="left:42px;top:260.1px;width:0.9px;height:98.55px;background:#959595;"></div>
<div style="left:42px;top:260.1px;width:6.1px;height:0.9px;background:#959595;"></div>
<div style="left:42px;top:273.05px;width:6.1px;height:0.9px;background:#959595;"></div>
<div style="left:42px;top:285.15px;width:6.1px;height:0.9px;background:#959595;"></div>
<div style="left:42px;top:297.25px;width:6.1px;height:0.9px;background:#959595;"></div>
<div style="left:42px;top:309.35px;width:6.1px;height:0.9px;background:#959595;"></div>
<div style="left:42px;top:321.45px;width:6.1px;height:0.9px;background:#959595;"></div>
<div style="left:42px;top:333.55px;width:6.1px;height:0.9px;background:#959595;"></div>
<div style="left:42px;top:345.65px;width:6.1px;height:0.9px;background:#959595;"></div>
<div style="left:42px;top:357.75px;width:6.1px;height:0.9px;background:#959595;"></div>
<div style="left:29.2px;top:487px;width:640.7px;height:12.8px;background:linear-gradient(#ebe8db,#ece9d9 80%,#e6dfcc);"></div>
<div style="left:459.6px;top:488.2px;width:104.6px;height:10.8px;background:#dddcdb;border:.7px solid #b9b8b3;border-right-color:#f3f2ec;border-bottom-color:#f3f2ec;"></div>
<span class="t" style="left:526.50px;top:488.30px;font-size:7.8px;line-height:11.8px;color:#111;letter-spacing:-0.145px;transform:scaleX(0.9447);transform-origin:0 50%;">150 000,00</span>
<span class="t" style="left:206.1px;top:537.5px;font-size:16px;line-height:20px;color:#404040;word-spacing:.74px;transform:scaleX(.917);transform-origin:0 50%;-webkit-text-stroke:.25px #404040;">Exemple d’un plan d’amortissement linéaire</span>
</div></body></html>
